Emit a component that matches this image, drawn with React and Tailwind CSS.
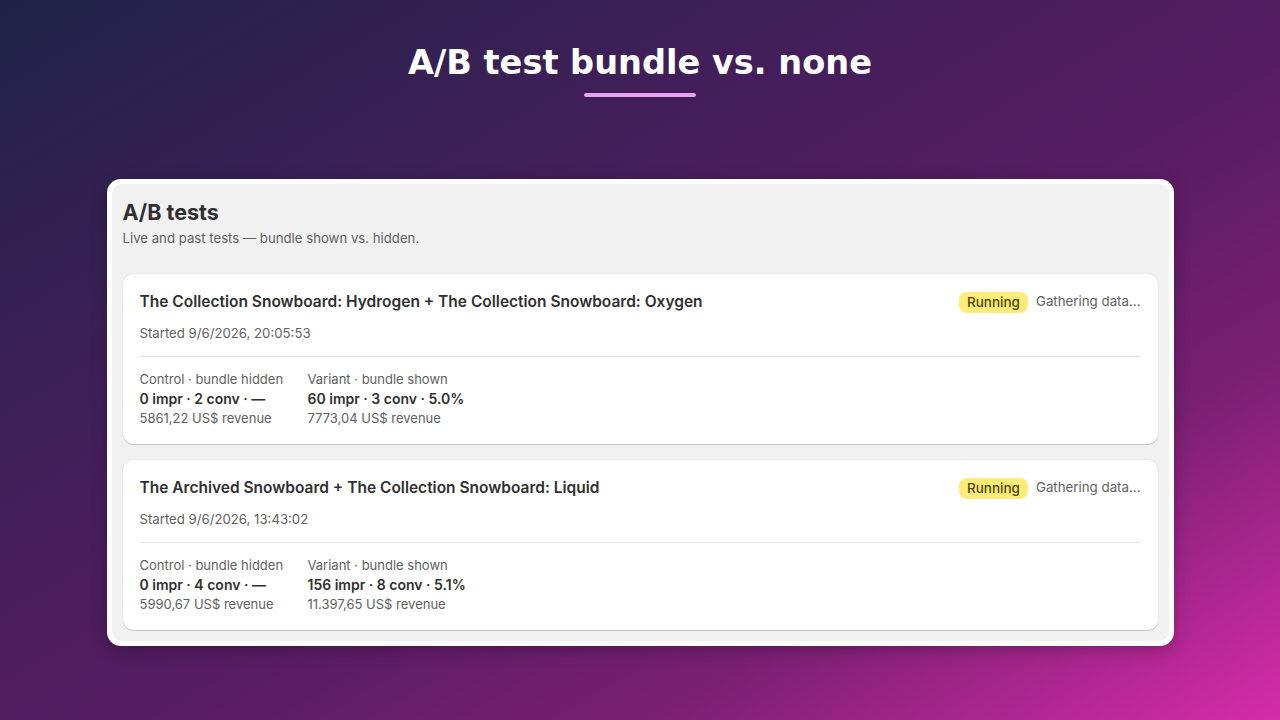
import React from 'react';

const tests = [
  {
    name: 'The Collection Snowboard: Hydrogen + The Collection Snowboard: Oxygen',
    started: 'Started 9/6/2026, 20:05:53',
    control: { stats: '0 impr · 2 conv · —', revenue: '5861,22 US$ revenue' },
    variant: { stats: '60 impr · 3 conv · 5.0%', revenue: '7773,04 US$ revenue' },
  },
  {
    name: 'The Archived Snowboard + The Collection Snowboard: Liquid',
    started: 'Started 9/6/2026, 13:43:02',
    control: { stats: '0 impr · 4 conv · —', revenue: '5990,67 US$ revenue' },
    variant: { stats: '156 impr · 8 conv · 5.1%', revenue: '11.397,65 US$ revenue' },
  },
];

function Stat({ label, stats, revenue, width }) {
  return (
    <div className={width}>
      <p className="text-[13px] leading-[20px] text-[#616161]">{label}</p>
      <p className="text-[14px] leading-[20px] font-semibold text-[#303030]">{stats}</p>
      <p className="text-[13px] leading-[18px] text-[#616161]">{revenue}</p>
    </div>
  );
}

function TestCard({ test }) {
  return (
    <div className="bg-white rounded-[10px] shadow-[0_1px_0_0_rgba(0,0,0,0.14),0_0_0_1px_rgba(0,0,0,0.04)] px-[17px] pt-[17px] pb-[17px]">
      <div className="flex items-center justify-between h-[22px]">
        <h3 className="text-[15.5px] font-semibold text-[#303030]">{test.name}</h3>
        <div className="flex items-center gap-[8px]">
          <span className="bg-[#ffeb78] text-[#4f4700] text-[13.5px] font-medium leading-[21px] px-[8px] rounded-[8px]">Running</span>
          <span className="text-[13.3px] text-[#616161]">Gathering data...</span>
        </div>
      </div>
      <p className="mt-[10px] text-[13.2px] leading-[20px] text-[#616161]">{test.started}</p>
      <div className="mt-[13px] border-t border-[#e3e3e3] pt-[12px] flex">
        <Stat label="Control · bundle hidden" width="w-[168px]" {...test.control} />
        <Stat label="Variant · bundle shown" width="w-[200px]" {...test.variant} />
      </div>
    </div>
  );
}

export default function App() {
  return (
    <div
      className="w-[1280px] h-[720px] overflow-hidden flex flex-col items-center bg-[linear-gradient(150deg,#1f2347_0%,#3f1f58_30%,#561c63_55%,#7a1f74_75%,#d62ca8_100%)]"
      style={{ fontFamily: 'Inter, "Liberation Sans", sans-serif' }}
    >
      <h1 className="mt-[41px] text-[33.6px] leading-[44px] font-bold text-white" style={{ fontFamily: '"DejaVu Sans", sans-serif' }}>
        A/B test bundle vs. none
      </h1>
      <div className="mt-[8px] w-[112px] h-[4px] rounded-full bg-[#e9a2f2]" />

      <div className="mt-[82px] w-[1067px] bg-white rounded-[14px] p-[5px] shadow-[0_4px_16px_rgba(0,0,0,0.25)]">
        <div className="bg-[#f1f1f1] rounded-[10px] px-[11px] pt-[13px] pb-[11px]">
          <h2 className="text-[21.5px] leading-[30px] font-bold text-[#303030]">A/B tests</h2>
          <p className="mt-[2px] text-[13.2px] leading-[18px] text-[#616161]">Live and past tests — bundle shown vs. hidden.</p>
          <div className="mt-[27px] flex flex-col gap-[16px]">
            {tests.map((t) => (
              <TestCard key={t.name} test={t} />
            ))}
          </div>
        </div>
      </div>
    </div>
  );
}
